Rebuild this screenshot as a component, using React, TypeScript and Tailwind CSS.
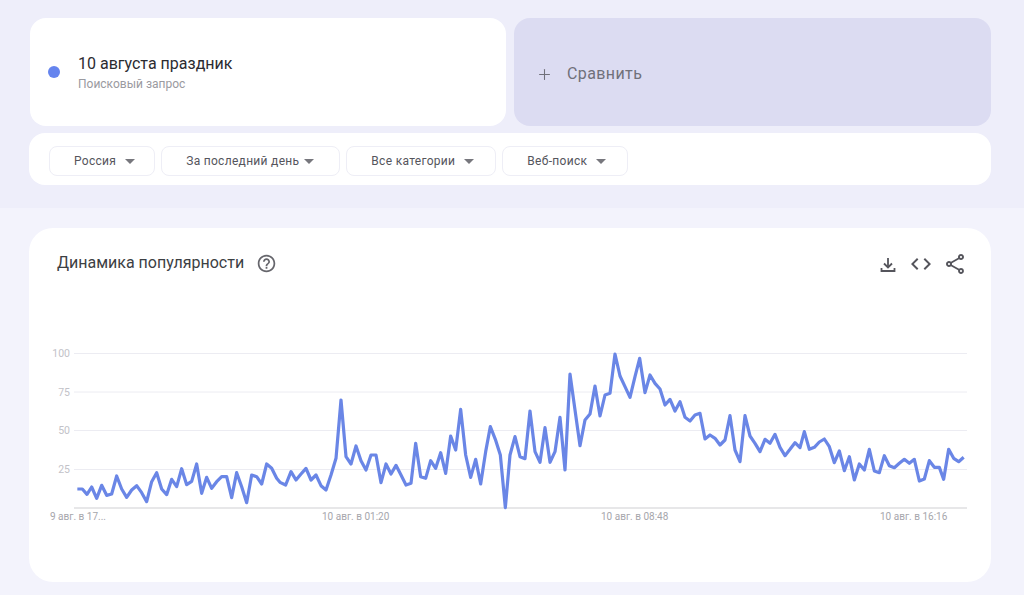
import React from 'react';
import { Plus } from 'lucide-react';
import { MdArrowDropDown, MdCode, MdHelpOutline, MdOutlineShare } from 'react-icons/md';

const filters = [
    { label: 'Россия', cls: 'gap-2 pr-4.5' },
    { label: 'За последний день', cls: 'gap-1 pr-6' },
    { label: 'Все категории', cls: 'gap-2 pr-5' },
    { label: 'Веб-поиск', cls: 'gap-2 pr-5' },
];

// traced from the curve: [x, y] on the page, one list per stretch of the time axis
const seg = (x0: number, pts: number[][]) => pts.map(([x, y]) => `${x0 + x / 3},${340 + y / 3}`).join(' ');

const trend = [
    seg(40, [[112, 447], [127, 447], [141, 463], [155, 441], [170, 475], [185, 436], [200, 466], [215, 462], [230, 408], [245, 447], [260, 472], [275, 450], [290, 437], [305, 458], [320, 485], [335, 425], [350, 398], [365, 447], [380, 464], [395, 418], [410, 440], [425, 386], [440, 434], [455, 424], [470, 372], [485, 460], [500, 412], [515, 445], [530, 425], [545, 410], [560, 410], [575, 473], [590, 398], [605, 440], [620, 488], [635, 405], [650, 410], [665, 432], [680, 372], [695, 385], [710, 415]]),
    seg(270, [[30, 427], [47, 435], [63, 395], [78, 420], [93, 402], [108, 385], [123, 420], [138, 405], [153, 437], [168, 450], [183, 405], [198, 355], [213, 180], [228, 350], [243, 372], [258, 318], [273, 362], [288, 390], [303, 345], [318, 345], [333, 428], [348, 372], [363, 402], [378, 376], [393, 405], [408, 435], [423, 430], [437, 310], [452, 410], [467, 415], [482, 362], [497, 385], [512, 338], [527, 400], [542, 288], [557, 330], [572, 208], [587, 345], [602, 412], [617, 358], [632, 432], [647, 335], [661, 260], [676, 298], [691, 345], [706, 503]]),
    seg(500, [[30, 345], [45, 290], [60, 350], [75, 356], [90, 213], [105, 335], [120, 367], [135, 263], [150, 367], [165, 335], [180, 232], [195, 390], [210, 102], [225, 210], [240, 317], [255, 240], [270, 222], [285, 138], [300, 228], [315, 165], [330, 160], [345, 42], [360, 108], [375, 140], [390, 172], [405, 110], [419, 55], [435, 158], [450, 105], [465, 130], [480, 147], [495, 195], [510, 178], [525, 213], [540, 185], [555, 232], [570, 243], [585, 225], [600, 220], [615, 297], [630, 285], [645, 295], [660, 315], [675, 300], [690, 227]]),
    seg(730, [[15, 330], [30, 365], [45, 227], [60, 288], [75, 310], [90, 335], [105, 298], [120, 310], [135, 283], [150, 322], [165, 347], [180, 328], [195, 308], [210, 323], [223, 275], [238, 328], [253, 322], [268, 306], [283, 297], [298, 320], [313, 368], [328, 333], [343, 392], [358, 350], [373, 420], [388, 372], [403, 390], [418, 328], [433, 393], [448, 398], [463, 347], [478, 377], [493, 383], [508, 370], [523, 358], [538, 370], [553, 358], [568, 423], [583, 417], [598, 362], [613, 382], [628, 382], [641, 418], [656, 328], [671, 355], [686, 365], [701, 352]]),
].join(' ');

const gridLines = [
    { y: 353.5, label: '100' },
    { y: 392, label: '75' },
    { y: 430.5, label: '50' },
    { y: 469.5, label: '25' },
];

const timeLabels = [
    { x: 50, label: '9 авг. в 17...' },
    { x: 322, label: '10 авг. в 01:20' },
    { x: 601, label: '10 авг. в 08:48' },
    { x: 880, label: '10 авг. в 16:16' },
];

const DownloadIcon = () => (
    <svg viewBox="0 0 24 24" className="w-6 h-6" fill="none" stroke="currentColor" strokeWidth="1.8">
        <path d="M13 6v9" />
        <path d="M9 11.5l4 4 4-4" />
        <path d="M6.5 16v3h13v-3" />
    </svg>
);

export default function App() {
    return (
        <div className="h-screen overflow-hidden bg-[#f3f3fc] pl-[29px] pr-[33px] text-[#3c4043] font-['Roboto',sans-serif]">
            {/* Search terms and filters */}
            <div className="-ml-[29px] -mr-[33px] h-52 bg-[#eeeefa] pl-[29px] pr-[33px] pt-4.5">
                <div className="grid grid-cols-2 gap-2">
                    <div className="ml-px h-27 rounded-2xl bg-white flex items-center gap-4.5 pl-4.5">
                        <span className="w-3 h-3 rounded-full bg-[#6584ee]"></span>
                        <div>
                            <div className="text-base text-[#2b2b30]">10 августа праздник</div>
                            <div className="text-xs text-[#9a9aa0]">Поисковый запрос</div>
                        </div>
                    </div>
                    <div className="h-27 rounded-2xl bg-[#dcdcf2] flex items-center gap-3.5 pl-5.5 pt-1 text-[#70707a]">
                        <Plus size={17} strokeWidth={1.5} />
                        <span className="text-base tracking-wide">Сравнить</span>
                    </div>
                </div>
                <div className="mt-1.75 h-13 rounded-2xl bg-white flex items-center gap-1.5 px-5 pt-1">
                    {filters.map(f => (
                        <div key={f.label} className={`h-7.5 rounded-lg border border-[#eeeef6] flex items-center pl-6 text-xs tracking-wide text-[#55555c] ${f.cls}`}>
                            {f.label}
                            <MdArrowDropDown size={24} className="-mx-1.5 text-[#77777d]" />
                        </div>
                    ))}
                </div>
            </div>

            {/* Interest over time */}
            <div className="mt-5 h-[354px] rounded-3xl bg-white">
                <div className="flex items-center pt-6 pl-7 pr-6">
                    <span className="text-base -mt-0.5">Динамика популярности</span>
                    <MdHelpOutline size={21} className="ml-3 -mt-0.5 text-[#66666c]" />
                    <div className="ml-auto flex items-center gap-2.5 text-[#55555c]">
                        <DownloadIcon />
                        <MdCode size={24} />
                        <MdOutlineShare size={24} />
                    </div>
                </div>
                <svg viewBox="29 340 962 192" className="mt-16 block w-full h-48">
                    {gridLines.map(g => (
                        <g key={g.label}>
                            <line x1="74" x2="967" y1={g.y} y2={g.y} stroke="#ececf2" strokeWidth="1" />
                            <text x="70" y={g.y + 3.5} textAnchor="end" fontSize="10.5" fill="#c2c2c8">{g.label}</text>
                        </g>
                    ))}
                    <line x1="74" x2="967" y1="508" y2="508" stroke="#cfcfd2" strokeWidth="1" />
                    <polyline points={trend} fill="none" stroke="#6a86e6" strokeWidth="3.2" strokeLinejoin="round" />
                    {timeLabels.map(t => (
                        <text key={t.label} x={t.x} y="519.5" fontSize="10" fill="#a6a6ac">{t.label}</text>
                    ))}
                </svg>
            </div>
        </div>
    );
}
